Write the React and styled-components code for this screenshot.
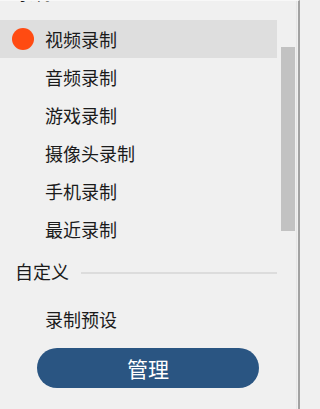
import styled, { createGlobalStyle } from "styled-components";

const GlobalStyle = createGlobalStyle`
  html, body {
    margin: 0;
    padding: 0;
    background: #f0f0f0;
  }
  body {
    font-family: "Noto Sans CJK SC", "Noto Sans", sans-serif;
  }
`;

const Panel = styled.div`
  width: 300px;
  height: 409px;
  box-sizing: border-box;
  display: flex;
  background: #f0f0f0;
  border-top: 1px solid #f8f8f8;
  border-right: 2px solid #a2a2a2;
  overflow: hidden;
`;

const Content = styled.div`
  width: 277px;
  display: flex;
  flex-direction: column;
  margin-top: -1px;
`;

const Gutter = styled.div`
  width: 20px;
  border-right: 1px solid #e6e6e6;
  box-sizing: border-box;
  padding: 46px 0 0 4px;
`;

const Thumb = styled.div`
  width: 14px;
  height: 184px;
  background: #c2c2c2;
`;

const SectionHeader = styled.div`
  display: flex;
  align-items: flex-start;
  gap: 12px;
  height: ${(p) => p.$height}px;
  margin-top: ${(p) => p.$offset || 0}px;
  padding: ${(p) => p.$padTop || 0}px 0 0 15px;
  box-sizing: border-box;
  font-size: 18px;
  line-height: 20px;
  color: #1b1b1b;
`;

const Rule = styled.div`
  flex: 1;
  height: 2px;
  background: #dcdcdc;
  margin-top: 11px;
`;

const Row = styled.div`
  display: flex;
  align-items: center;
  gap: 11px;
  height: 38px;
  box-sizing: border-box;
  padding: 0 0 1px 12px;
  background: ${(p) => (p.$active ? "#dedede" : "transparent")};
  font-size: 18px;
  color: #1b1b1b;
`;

const Indicator = styled.span`
  width: 22px;
  height: 22px;
  border-radius: 50%;
  background: ${(p) => (p.$on ? "#ff4b12" : "transparent")};
  flex-shrink: 0;
`;

const ManageButton = styled.button`
  margin: 10px 0 0 37px;
  width: 222px;
  height: 40px;
  border: none;
  border-radius: 20px;
  background: #2a5582;
  color: #ffffff;
  font-family: "Noto Sans CJK SC", "Noto Sans", sans-serif;
  font-size: 21px;
  cursor: pointer;
`;

const presets = ["视频录制", "音频录制", "游戏录制", "摄像头录制", "手机录制", "最近录制"];

export default function App() {
  const active = "视频录制";

  return (
    <>
      <GlobalStyle />
      <Panel>
        <Content>
          <SectionHeader $height={44} $offset={-24} $padTop={6}>
            录制
          </SectionHeader>
          {presets.map((name) => (
            <Row key={name} $active={name === active}>
              <Indicator $on={name === active} />
              {name}
            </Row>
          ))}
          <SectionHeader $height={52} $padTop={13}>
            自定义
            <Rule />
          </SectionHeader>
          <Row>
            <Indicator />
            录制预设
          </Row>
          <ManageButton>管理</ManageButton>
        </Content>
        <Gutter>
          <Thumb />
        </Gutter>
      </Panel>
    </>
  );
}
